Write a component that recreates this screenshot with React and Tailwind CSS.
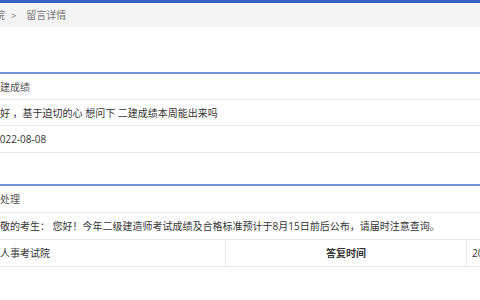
export default function App() {
  const font = { fontFamily: '"Open Sans", "Noto Sans CJK SC", sans-serif' };
  return (
    <div className="w-[480px] h-[300px] overflow-hidden bg-white text-[10px] leading-none text-[#333]" style={font}>
      <div className="h-[3px] bg-[#3561c2]" />
      <div className="h-[24px] bg-[#f4f4f4] flex items-center text-[#777]">
        <span className="ml-[-5px]">院</span>
        <span className="ml-[6px] text-[9px]">&gt;</span>
        <span className="ml-[10px]">留言详情</span>
      </div>
      <div className="h-[45px]" />
      <div className="ml-[-10px] w-[620px]">
        <div className="h-[2px] bg-[#7590d2]" />
        <div className="h-[26px] flex items-center border-b border-[#e8e8e8] text-[#555]">二建成绩</div>
        <div className="h-[26px] flex items-center border-b border-[#e8e8e8]">您好 ，基于迫切的心 想问下 二建成绩本周能出来吗</div>
        <div className="h-[27px] flex items-center border-b border-[#e8e8e8]">
          <span className="ml-[4px]">2022-08-08</span>
        </div>
        <div className="h-[31px]" />
        <div className="h-[2px] bg-[#7590d2]" />
        <div className="h-[27px] flex items-center border-b border-[#e8e8e8] text-[#555]">
          <span className="ml-[10px]">处理</span>
        </div>
        <div className="h-[27px] flex items-center border-b border-[#e8e8e8]">尊敬的考生： 您好！今年二级建造师考试成绩及合格标准预计于8月15日前后公布，请届时注意查询。</div>
        <div className="h-[27px] flex border-b border-[#e8e8e8]">
          <div className="w-[236px] flex items-center border-r border-[#e8e8e8]">省人事考试院</div>
          <div className="w-[241px] flex items-center justify-center font-bold border-r border-[#e8e8e8]">答复时间</div>
          <div className="flex-1 flex items-center pl-[5px]">2022-08-09</div>
        </div>
      </div>
    </div>
  );
}
